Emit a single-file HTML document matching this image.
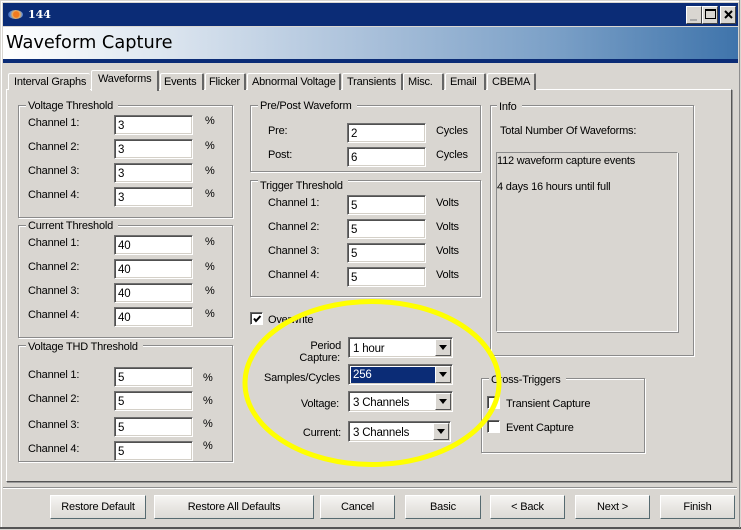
<!DOCTYPE html>
<html><head><meta charset="utf-8"><style>
html,body{margin:0;padding:0;width:741px;height:530px;overflow:hidden;background:#d9d6d1}
body{position:relative;font-family:"Liberation Sans",sans-serif;font-size:11px;letter-spacing:-.2px;color:#000}
div,span{position:absolute;box-sizing:border-box}
.t{white-space:nowrap;line-height:14px;height:14px;margin-top:1px}
.r{text-align:right}
.g{border:1px solid #8b8b8b;box-shadow:1px 1px 0 #fff,inset 1px 1px 0 #fff}
.l{white-space:nowrap;line-height:14px;height:14px;background:#d9d6d1;padding:0 5px 0 2px}
.i{width:79px;height:20px;background:#fff;border:1px solid;border-color:#707070 #fff #fff #707070;box-shadow:inset 1px 1px 0 #505050,inset -1px -1px 0 #d4d0c8;padding:3px 0 0 3px;line-height:15px;font-size:11.5px}
.c{height:21px;background:#fff;border:1px solid;border-color:#707070 #fff #fff #707070;box-shadow:inset 1px 1px 0 #505050,inset -1px -1px 0 #d4d0c8;padding:4px 0 0 4px;line-height:14px;font-size:11.5px}
.a{right:1px;top:1px;width:16px;height:17px;background:#d9d6d1;border:1px solid;border-color:#fff #555 #555 #fff}
.a:after{content:"";position:absolute;left:3px;top:5px;border:4px solid transparent;border-top:5px solid #000;border-bottom:0}
.b{height:24px;top:495px;text-align:center;line-height:23px;background:linear-gradient(#f6f5f3,#e6e4e0 60%,#dcdad6);border:1px solid;border-color:#fff #566a70 #566a70 #fff;white-space:nowrap}
.tab{top:73px;height:17px;background:#d9d6d1;border-top:1px solid #fff;border-left:1px solid #fff;border-right:2px solid #666;border-radius:2px 2px 0 0}
.w{border:1px solid;border-color:#fff #444 #444 #fff;background:#d9d6d1;height:18px;top:6px}
</style></head><body>
<!-- window frame -->
<div style="left:1px;top:1px;width:738px;height:1px;background:#fff"></div>
<div style="left:1px;top:1px;width:1px;height:527px;background:#fff"></div>
<div style="left:0;top:527px;width:741px;height:3px;background:#555;border-bottom:1px solid #d9d6d1"></div>
<div style="left:739px;top:0;width:1px;height:528px;background:#8f8f8f"></div>
<div style="left:3px;top:3px;width:735px;height:23px;background:#0b2c76"></div>
<div style="left:8px;top:10px;width:15px;height:9px;border-radius:50%;background:radial-gradient(circle at 55% 50%,#f07a20 0 30%,#e8b060 40%,#5a8ad8 65%,#27408a 100%)"></div>
<div class="t" style="left:28px;top:7px;color:#fff;font:bold 11px/14px 'DejaVu Serif',serif;letter-spacing:0">144</div>
<div class="w" style="left:686px;width:16px"><span style="left:3px;top:12px;width:7px;height:2px;background:#a9a9a9"></span></div>
<div class="w" style="left:702px;width:16px"><span style="left:2px;top:2px;width:11px;height:10px;border:1px solid #000;border-top-width:2px"></span></div>
<div class="w" style="left:720px;width:16px"><svg style="position:absolute;left:3px;top:3px" width="9" height="9"><path d="M1 1L8 8M8 1L1 8" stroke="#000" stroke-width="2"/></svg></div>
<!-- banner -->
<div style="left:3px;top:27px;width:735px;height:32px;background:linear-gradient(90deg,#fff 0,#dce5ef 22%,#a9c0da 50%,#7ba0c7 75%,#3f74ab 100%)"></div>
<div style="left:3px;top:59px;width:735px;height:4px;background:#0b2c76"></div>
<div class="t" style="left:6px;top:32px;height:20px;font:17.8px/20px 'DejaVu Sans',sans-serif;letter-spacing:0;color:#000">Waveform Capture</div>
<!-- panel -->
<div style="left:6px;top:89px;width:726px;height:393px;border:1px solid;border-color:#fff #555 #555 #fff;box-shadow:1px 1px 0 #999"></div>
<div style="left:3px;top:487px;width:734px;height:1px;background:#8f8f8f"></div>
<div style="left:3px;top:488px;width:734px;height:1px;background:#fff"></div>
<!-- tabs -->
<div class="tab" style="left:8px;width:82px;border-right:0"></div><div class="t" style="left:14px;top:74px">Interval Graphs</div>
<div class="tab" style="left:91px;top:70px;width:68px;height:21px;z-index:2"></div><div class="t" style="left:98px;top:71px;z-index:3">Waveforms</div>
<div class="tab" style="left:160px;width:44px"></div><div class="t" style="left:164px;top:74px">Events</div>
<div class="tab" style="left:205px;width:41px"></div><div class="t" style="left:209px;top:74px">Flicker</div>
<div class="tab" style="left:247px;width:94px"></div><div class="t" style="left:252px;top:74px">Abnormal Voltage</div>
<div class="tab" style="left:342px;width:61px"></div><div class="t" style="left:347px;top:74px">Transients</div>
<div class="tab" style="left:403px;width:41px"></div><div class="t" style="left:408px;top:74px">Misc.</div>
<div class="tab" style="left:445px;width:41px"></div><div class="t" style="left:450px;top:74px">Email</div>
<div class="tab" style="left:487px;width:49px"></div><div class="t" style="left:492px;top:74px">CBEMA</div>
<!-- group boxes -->
<div class="g" style="left:18px;top:105px;width:215px;height:113px"></div><div class="l" style="left:26px;top:99px">Voltage Threshold</div>
<div class="g" style="left:18px;top:225px;width:215px;height:113px"></div><div class="l" style="left:26px;top:219px">Current Threshold</div>
<div class="g" style="left:18px;top:345px;width:215px;height:117px"></div><div class="l" style="left:26px;top:340px">Voltage THD Threshold</div>
<div class="g" style="left:250px;top:105px;width:231px;height:67px"></div><div class="l" style="left:258px;top:99px">Pre/Post Waveform</div>
<div class="g" style="left:250px;top:180px;width:231px;height:117px"></div><div class="l" style="left:258px;top:179px">Trigger Threshold</div>
<div class="g" style="left:490px;top:105px;width:204px;height:251px"></div><div class="l" style="left:497px;top:100px">Info</div>
<div class="g" style="left:481px;top:378px;width:164px;height:75px"></div><div class="l" style="left:489px;top:373px">Cross-Triggers</div>
<!-- voltage threshold -->
<div class="t" style="left:28px;top:115px">Channel 1:</div><div class="i" style="left:114px;top:115px">3</div><div class="t" style="left:205px;top:113px">%</div>
<div class="t" style="left:28px;top:139px">Channel 2:</div><div class="i" style="left:114px;top:139px">3</div><div class="t" style="left:205px;top:138px">%</div>
<div class="t" style="left:28px;top:163px">Channel 3:</div><div class="i" style="left:114px;top:163px">3</div><div class="t" style="left:205px;top:163px">%</div>
<div class="t" style="left:28px;top:187px">Channel 4:</div><div class="i" style="left:114px;top:187px">3</div><div class="t" style="left:205px;top:186px">%</div>
<!-- current threshold -->
<div class="t" style="left:28px;top:235px">Channel 1:</div><div class="i" style="left:114px;top:235px">40</div><div class="t" style="left:205px;top:234px">%</div>
<div class="t" style="left:28px;top:259px">Channel 2:</div><div class="i" style="left:114px;top:259px">40</div><div class="t" style="left:205px;top:259px">%</div>
<div class="t" style="left:28px;top:283px">Channel 3:</div><div class="i" style="left:114px;top:283px">40</div><div class="t" style="left:205px;top:283px">%</div>
<div class="t" style="left:28px;top:307px">Channel 4:</div><div class="i" style="left:114px;top:307px">40</div><div class="t" style="left:205px;top:306px">%</div>
<!-- thd -->
<div class="t" style="left:28px;top:367px">Channel 1:</div><div class="i" style="left:114px;top:367px">5</div><div class="t" style="left:203px;top:370px">%</div>
<div class="t" style="left:28px;top:391px">Channel 2:</div><div class="i" style="left:114px;top:391px">5</div><div class="t" style="left:203px;top:393px">%</div>
<div class="t" style="left:28px;top:417px">Channel 3:</div><div class="i" style="left:114px;top:417px">5</div><div class="t" style="left:203px;top:416px">%</div>
<div class="t" style="left:28px;top:441px">Channel 4:</div><div class="i" style="left:114px;top:441px">5</div><div class="t" style="left:203px;top:438px">%</div>
<!-- pre/post -->
<div class="t" style="left:268px;top:123px">Pre:</div><div class="i" style="left:347px;top:123px">2</div><div class="t" style="left:436px;top:123px">Cycles</div>
<div class="t" style="left:268px;top:147px">Post:</div><div class="i" style="left:347px;top:147px">6</div><div class="t" style="left:436px;top:147px">Cycles</div>
<!-- trigger -->
<div class="t" style="left:268px;top:195px">Channel 1:</div><div class="i" style="left:347px;top:195px">5</div><div class="t" style="left:436px;top:195px">Volts</div>
<div class="t" style="left:268px;top:219px">Channel 2:</div><div class="i" style="left:347px;top:219px">5</div><div class="t" style="left:436px;top:219px">Volts</div>
<div class="t" style="left:268px;top:243px">Channel 3:</div><div class="i" style="left:347px;top:243px">5</div><div class="t" style="left:436px;top:243px">Volts</div>
<div class="t" style="left:268px;top:267px">Channel 4:</div><div class="i" style="left:347px;top:267px">5</div><div class="t" style="left:436px;top:267px">Volts</div>
<!-- overwrite -->
<div style="left:250px;top:312px;width:13px;height:13px;background:#fff;border:1px solid;border-color:#666 #fff #fff #666;box-shadow:inset 1px 1px 0 #404040"><svg style="position:absolute;left:1px;top:1px" width="10" height="10"><path d="M2 4.5L4 7L8.5 2" fill="none" stroke="#000" stroke-width="2"/></svg></div>
<div class="t" style="left:268px;top:312px">Overwrite</div>
<!-- combos -->
<div class="t r" style="left:270px;width:71px;top:338px">Period</div>
<div class="t r" style="left:270px;width:70px;top:350px">Capture:</div>
<div class="c" style="left:348px;top:337px;width:105px">1 hour<span class="a"></span></div>
<div class="t r" style="left:255px;width:85px;top:370px">Samples/Cycles</div>
<div class="c" style="left:348px;top:364px;width:105px"><span style="left:2px;top:2px;width:85px;height:16px;background:#0b2c76;color:#fff;line-height:16px;padding-left:2px">256</span><span class="a"></span></div>
<div class="t r" style="left:270px;width:69px;top:396px">Voltage:</div>
<div class="c" style="left:348px;top:391px;width:105px">3 Channels<span class="a"></span></div>
<div class="t r" style="left:270px;width:71px;top:425px">Current:</div>
<div class="c" style="left:348px;top:421px;width:103px">3 Channels<span class="a"></span></div>
<!-- info -->
<div class="t" style="left:500px;top:123px">Total Number Of Waveforms:</div>
<div style="left:496px;top:152px;width:182px;height:180px;border:1px solid;border-color:#8b8b8b #fff #fff #8b8b8b;box-shadow:1px 1px 0 #8b8b8b"></div>
<div class="t" style="left:497px;top:153px">112 waveform capture events</div>
<div class="t" style="left:497px;top:179px">4 days 16 hours until full</div>
<!-- cross triggers -->
<div style="left:487px;top:396px;width:13px;height:13px;background:#fff;border:1px solid;border-color:#666 #fff #fff #666;box-shadow:inset 1px 1px 0 #404040"></div>
<div class="t" style="left:506px;top:396px">Transient Capture</div>
<div style="left:487px;top:420px;width:13px;height:13px;background:#fff;border:1px solid;border-color:#666 #fff #fff #666;box-shadow:inset 1px 1px 0 #404040"></div>
<div class="t" style="left:506px;top:420px">Event Capture</div>
<!-- buttons -->
<div class="b" style="left:50px;width:96px">Restore Default</div>
<div class="b" style="left:154px;width:160px">Restore All Defaults</div>
<div class="b" style="left:320px;width:75px">Cancel</div>
<div class="b" style="left:405px;width:76px">Basic</div>
<div class="b" style="left:490px;width:75px">&lt; Back</div>
<div class="b" style="left:575px;width:75px">Next &gt;</div>
<div class="b" style="left:660px;width:75px">Finish</div>
<!-- yellow ellipse -->
<svg style="position:absolute;left:0;top:0" width="741" height="530"><ellipse cx="372" cy="383" rx="127" ry="81.5" fill="none" stroke="#ffff00" stroke-width="5"/></svg>
</body></html>
